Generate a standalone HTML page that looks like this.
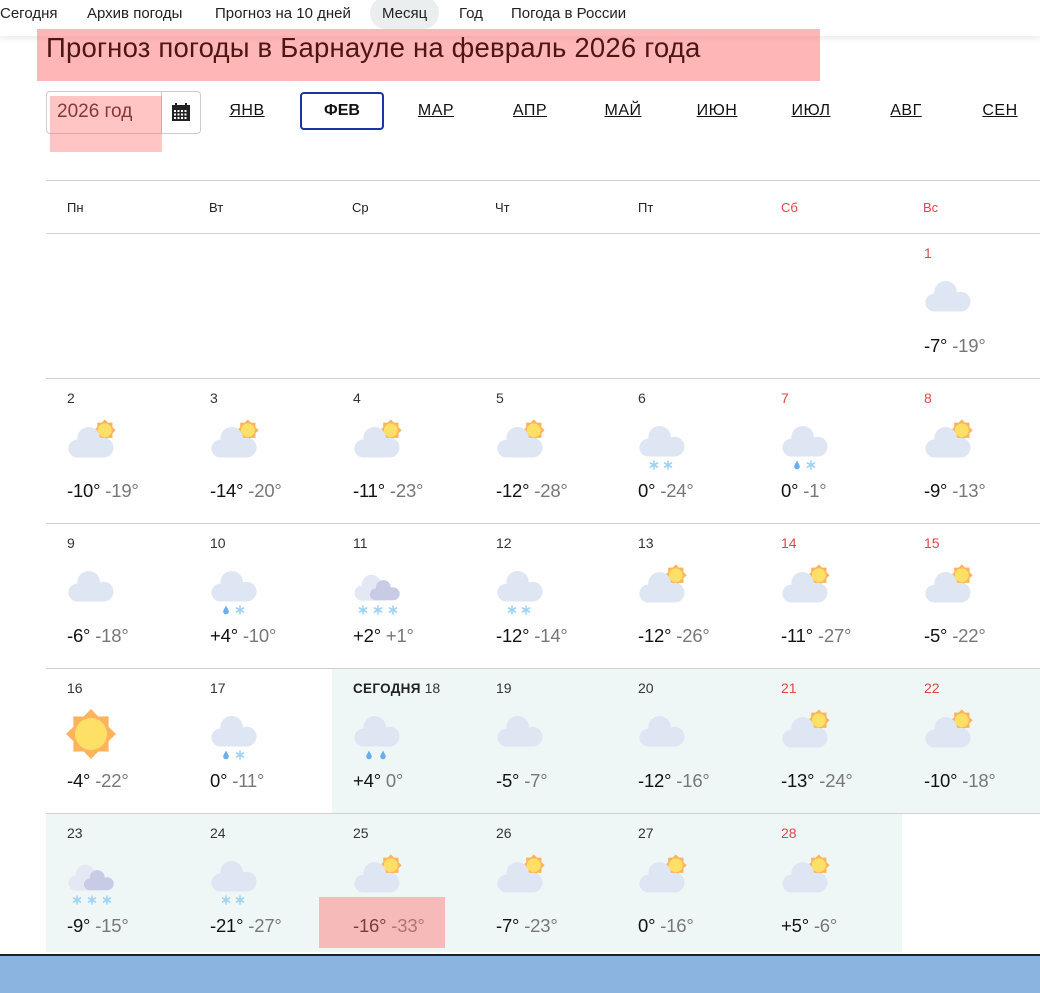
<!DOCTYPE html>
<html><head><meta charset="utf-8">
<style>
*{margin:0;padding:0;box-sizing:border-box}
body{width:1040px;height:993px;overflow:hidden;background:#fff;font-family:"Liberation Sans","DejaVu Sans",sans-serif;color:#111;position:relative}
.nav{position:absolute;left:0;top:0;width:1040px;height:36px;box-shadow:0 3px 6px rgba(0,0,0,.08);background:#fff}
.nav span{position:absolute;top:5px;font-size:15px;line-height:18px;color:#222;white-space:nowrap}
.pill{background:#eaeeee;border-radius:16px;height:32px;top:-3px!important;padding:8px 12px 0}
h1{position:absolute;left:46px;top:32px;font-size:27.5px;font-weight:normal;color:#4d1515;white-space:nowrap;letter-spacing:.2px;z-index:2}
.ov{position:absolute;background:rgba(255,110,110,.5)}
.yr{position:absolute;left:46px;top:91px;width:155px;height:43px;border:1px solid #ccc;border-radius:4px}
.yr .dv{position:absolute;left:114px;top:0;width:1px;height:41px;background:#ccc}
.yr .tx{position:absolute;left:10px;top:9px;font-size:19px;color:#3a1010}
.m{position:absolute;top:102px;font-size:16px;text-decoration:underline;transform:translateX(-50%);letter-spacing:.5px}
.feb{position:absolute;left:300px;top:92px;width:84px;height:38px;border:2px solid #1a35a8;border-radius:4px;font-weight:bold;font-size:16px;text-align:center;line-height:34px}
.hl{position:absolute;left:46px;width:994px;height:1px;background:#d0d0d0}
.wd{position:absolute;top:200px;font-size:13px;color:#222}
.red{color:#e04646!important}
.bg{position:absolute;background:#eff7f6}
.c{position:absolute;width:143px;height:145px}
.d{position:absolute;left:21px;top:12px;font-size:14px;color:#333}
.d b{font-size:13.5px;color:#222;letter-spacing:.3px}
.c svg{position:absolute;left:20px;top:40px;width:60px;height:60px}
.t{position:absolute;left:21px;top:102px;font-size:18.5px;white-space:nowrap;color:#111;letter-spacing:-.2px}
.t span{color:#777}
.bar{position:absolute;left:0;top:954px;width:1040px;height:39px;background:#8cb4e0;border-top:2px solid #222}
</style></head><body>
<svg width="0" height="0" style="position:absolute">
<defs>
<symbol id="cl" viewBox="0 0 50 34"><circle cx="23" cy="13" r="12"/><circle cx="11" cy="24" r="9.5"/><circle cx="39" cy="23" r="10.5"/><rect x="11" y="20" width="28" height="13.5"/></symbol>
<symbol id="sn" viewBox="0 0 60 60"><polygon fill="#ffb35c" points="50,26 42.55,33.27 42.68,43.68 32.27,43.55 25,51 17.73,43.55 7.32,43.68 7.45,33.27 0,26 7.45,18.73 7.32,8.32 17.73,8.45 25,1 32.27,8.45 42.68,8.32 42.55,18.73"/><circle cx="25" cy="26" r="16" fill="#ffe066"/></symbol>
<symbol id="fl" viewBox="0 0 10 10"><g stroke="#9fd3f5" stroke-width="1.6" stroke-linecap="round"><line x1="5" y1="1" x2="5" y2="9"/><line x1="1.5" y1="3" x2="8.5" y2="7"/><line x1="1.5" y1="7" x2="8.5" y2="3"/></g></symbol>
<symbol id="dr" viewBox="0 0 10 12"><path d="M5 1 C7 5 8.5 7 8.5 8.5 A3.5 3.5 0 0 1 1.5 8.5 C1.5 7 3 5 5 1Z" fill="#6aaef0"/></symbol>
<symbol id="pc" viewBox="0 0 60 60"><use href="#sn" x="28" y="1" width="26" height="26"/><use href="#cl" x="1" y="8" width="47" height="32" fill="#dfe6f3"/></symbol>
<symbol id="c" viewBox="0 0 60 60"><use href="#cl" x="1" y="7" width="47" height="32" fill="#dfe6f3"/></symbol>
<symbol id="s2" viewBox="0 0 60 60"><use href="#cl" x="1" y="7" width="47" height="32" fill="#dfe6f3"/><use href="#fl" x="12" y="42" width="10" height="10"/><use href="#fl" x="26" y="42" width="10" height="10"/></symbol>
<symbol id="rs" viewBox="0 0 60 60"><use href="#cl" x="1" y="7" width="47" height="32" fill="#dfe6f3"/><use href="#dr" x="13" y="41" width="8" height="11"/><use href="#fl" x="26" y="42" width="10" height="10"/></symbol>
<symbol id="r2" viewBox="0 0 60 60"><use href="#cl" x="1" y="7" width="47" height="32" fill="#dfe6f3"/><use href="#dr" x="13" y="41" width="8" height="11"/><use href="#dr" x="27" y="41" width="8" height="11"/></symbol>
<symbol id="h3" viewBox="0 0 60 60"><use href="#cl" x="1" y="11" width="40" height="27" fill="#e3e8f4"/><use href="#cl" x="17" y="16" width="31" height="22" fill="#c8cbe6"/><use href="#fl" x="6" y="42" width="10" height="10"/><use href="#fl" x="21" y="42" width="10" height="10"/><use href="#fl" x="36" y="42" width="10" height="10"/></symbol>
</defs></svg>

<div class="nav">
<span style="left:0">Сегодня</span><span style="left:87px">Архив погоды</span><span style="left:215px">Прогноз на 10 дней</span><span class="pill" style="left:370px">Месяц</span><span style="left:459px">Год</span><span style="left:511px">Погода в России</span>
</div>
<h1>Прогноз погоды в Барнауле на февраль 2026 года</h1>
<div class="ov" style="left:37px;top:29px;width:783px;height:52px"></div>

<div class="yr"><div class="tx">2026 год</div><div class="dv"></div>
<svg style="position:absolute;left:124px;top:10px" width="20" height="20" viewBox="0 0 20 20"><rect x="1" y="3" width="18" height="16" fill="#222"/><rect x="4" y="1" width="2" height="4" fill="#222"/><rect x="14" y="1" width="2" height="4" fill="#222"/><g fill="#fff"><rect x="3" y="8" width="2" height="2"/><rect x="6.5" y="8" width="2" height="2"/><rect x="10" y="8" width="2" height="2"/><rect x="13.5" y="8" width="2" height="2"/><rect x="3" y="11.5" width="2" height="2"/><rect x="6.5" y="11.5" width="2" height="2"/><rect x="10" y="11.5" width="2" height="2"/><rect x="13.5" y="11.5" width="2" height="2"/><rect x="3" y="15" width="2" height="2"/><rect x="6.5" y="15" width="2" height="2"/><rect x="10" y="15" width="2" height="2"/><rect x="13.5" y="15" width="2" height="2"/></g></svg></div>
<div class="ov" style="left:50px;top:96px;width:112px;height:56px;background:rgba(255,110,110,.4)"></div>
<span class="m" style="left:247px">ЯНВ</span>
<div class="feb">ФЕВ</div>
<span class="m" style="left:436px">МАР</span><span class="m" style="left:530px">АПР</span><span class="m" style="left:623px">МАЙ</span><span class="m" style="left:717px">ИЮН</span><span class="m" style="left:811px">ИЮЛ</span><span class="m" style="left:906px">АВГ</span><span class="m" style="left:1000px">СЕН</span>

<div class="hl" style="top:180px"></div>
<span class="wd" style="left:67px">Пн</span><span class="wd" style="left:209px">Вт</span><span class="wd" style="left:352px">Ср</span><span class="wd" style="left:495px">Чт</span><span class="wd" style="left:638px">Пт</span><span class="wd red" style="left:781px">Сб</span><span class="wd red" style="left:923px">Вс</span>
<div class="hl" style="top:233px"></div>
<div class="hl" style="top:378px"></div>
<div class="hl" style="top:523px"></div>
<div class="hl" style="top:668px"></div>
<div class="bg" style="left:332px;top:669px;width:708px;height:144px"></div>
<div class="hl" style="top:813px"></div>
<div class="bg" style="left:46px;top:814px;width:856px;height:138px"></div>

<div class="c" style="left:903px;top:233px"><div class="d red">1</div><svg><use href="#c"/></svg><div class="t">-7° <span>-19°</span></div></div>

<div class="c" style="left:46px;top:378px"><div class="d">2</div><svg><use href="#pc"/></svg><div class="t">-10° <span>-19°</span></div></div>
<div class="c" style="left:189px;top:378px"><div class="d">3</div><svg><use href="#pc"/></svg><div class="t">-14° <span>-20°</span></div></div>
<div class="c" style="left:332px;top:378px"><div class="d">4</div><svg><use href="#pc"/></svg><div class="t">-11° <span>-23°</span></div></div>
<div class="c" style="left:475px;top:378px"><div class="d">5</div><svg><use href="#pc"/></svg><div class="t">-12° <span>-28°</span></div></div>
<div class="c" style="left:617px;top:378px"><div class="d">6</div><svg><use href="#s2"/></svg><div class="t">0° <span>-24°</span></div></div>
<div class="c" style="left:760px;top:378px"><div class="d red">7</div><svg><use href="#rs"/></svg><div class="t">0° <span>-1°</span></div></div>
<div class="c" style="left:903px;top:378px"><div class="d red">8</div><svg><use href="#pc"/></svg><div class="t">-9° <span>-13°</span></div></div>

<div class="c" style="left:46px;top:523px"><div class="d">9</div><svg><use href="#c"/></svg><div class="t">-6° <span>-18°</span></div></div>
<div class="c" style="left:189px;top:523px"><div class="d">10</div><svg><use href="#rs"/></svg><div class="t">+4° <span>-10°</span></div></div>
<div class="c" style="left:332px;top:523px"><div class="d">11</div><svg><use href="#h3"/></svg><div class="t">+2° <span>+1°</span></div></div>
<div class="c" style="left:475px;top:523px"><div class="d">12</div><svg><use href="#s2"/></svg><div class="t">-12° <span>-14°</span></div></div>
<div class="c" style="left:617px;top:523px"><div class="d">13</div><svg><use href="#pc"/></svg><div class="t">-12° <span>-26°</span></div></div>
<div class="c" style="left:760px;top:523px"><div class="d red">14</div><svg><use href="#pc"/></svg><div class="t">-11° <span>-27°</span></div></div>
<div class="c" style="left:903px;top:523px"><div class="d red">15</div><svg><use href="#pc"/></svg><div class="t">-5° <span>-22°</span></div></div>

<div class="c" style="left:46px;top:668px"><div class="d">16</div><svg><use href="#sn"/></svg><div class="t">-4° <span>-22°</span></div></div>
<div class="c" style="left:189px;top:668px"><div class="d">17</div><svg><use href="#rs"/></svg><div class="t">0° <span>-11°</span></div></div>
<div class="c" style="left:332px;top:668px"><div class="d"><b>СЕГОДНЯ</b> 18</div><svg><use href="#r2"/></svg><div class="t">+4° <span>0°</span></div></div>
<div class="c" style="left:475px;top:668px"><div class="d">19</div><svg><use href="#c"/></svg><div class="t">-5° <span>-7°</span></div></div>
<div class="c" style="left:617px;top:668px"><div class="d">20</div><svg><use href="#c"/></svg><div class="t">-12° <span>-16°</span></div></div>
<div class="c" style="left:760px;top:668px"><div class="d red">21</div><svg><use href="#pc"/></svg><div class="t">-13° <span>-24°</span></div></div>
<div class="c" style="left:903px;top:668px"><div class="d red">22</div><svg><use href="#pc"/></svg><div class="t">-10° <span>-18°</span></div></div>

<div class="c" style="left:46px;top:813px"><div class="d">23</div><svg><use href="#h3"/></svg><div class="t">-9° <span>-15°</span></div></div>
<div class="c" style="left:189px;top:813px"><div class="d">24</div><svg><use href="#s2"/></svg><div class="t">-21° <span>-27°</span></div></div>
<div class="c" style="left:332px;top:813px"><div class="d">25</div><svg><use href="#pc"/></svg><div class="t">-16° <span>-33°</span></div></div>
<div class="c" style="left:475px;top:813px"><div class="d">26</div><svg><use href="#pc"/></svg><div class="t">-7° <span>-23°</span></div></div>
<div class="c" style="left:617px;top:813px"><div class="d">27</div><svg><use href="#pc"/></svg><div class="t">0° <span>-16°</span></div></div>
<div class="c" style="left:760px;top:813px"><div class="d red">28</div><svg><use href="#pc"/></svg><div class="t">+5° <span>-6°</span></div></div>
<div class="ov" style="left:319px;top:897px;width:126px;height:51px;background:rgba(255,110,110,.45)"></div>

<div class="bar"></div>
</body></html>
